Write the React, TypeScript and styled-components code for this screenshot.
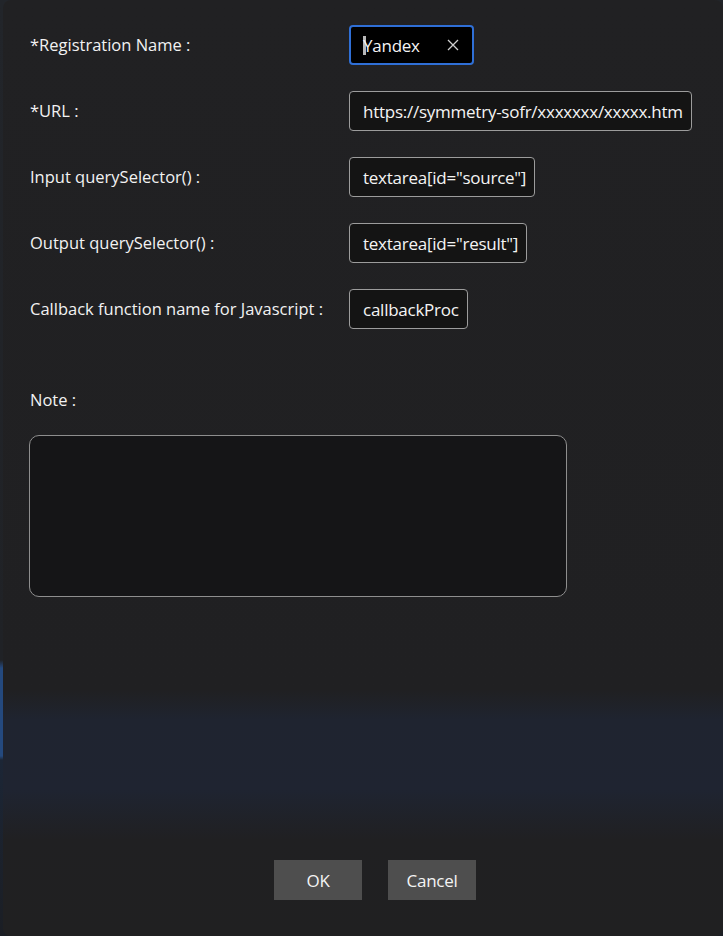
import React from "react";
import styled, { createGlobalStyle } from "styled-components";

const Global = createGlobalStyle`
  html, body {
    margin: 0;
    padding: 0;
    width: 723px;
    height: 936px;
    overflow: hidden;
    background: #1a1d22;
  }
  #root { height: 936px; }
  * { box-sizing: border-box; }
`;

const Screen = styled.div`
  display: flex;
  height: 936px;
  background: linear-gradient(
    180deg,
    #22252a 0px,
    #202226 660px,
    #24497e 668px,
    #24497e 756px,
    #1c2636 760px,
    #1b1e24 936px
  );
  padding-left: 3px;
`;

const Dialog = styled.div`
  flex: 1;
  display: flex;
  flex-direction: column;
  height: 936px;
  border-radius: 8px;
  background: linear-gradient(
    180deg,
    #212123 0px,
    #202022 690px,
    #1f2430 720px,
    #1f2431 790px,
    #202022 840px,
    #202021 936px
  );
  font-family: "Open Sans", "Noto Sans", sans-serif;
  color: #f2f2f2;
  padding: 25px 0 36px 27px;
`;

const Form = styled.div`
  display: grid;
  grid-template-columns: 319px auto;
  grid-auto-rows: 40px;
  row-gap: 26px;
  align-items: center;
  justify-items: start;
`;

const Label = styled.div`
  font-size: 16.5px;
  line-height: 20px;
  color: #f2f2f2;
`;

const Field = styled.div<{ $focused?: boolean }>`
  display: flex;
  align-items: center;
  height: 40px;
  padding: 0 ${(p) => (p.$focused ? "13px" : "8px")} 0 ${(p) => (p.$focused ? "12px" : "13px")};
  border-radius: 4px;
  border: ${(p) => (p.$focused ? "2px solid #2f6fd6" : "1px solid #9c9c9c")};
  background: ${(p) => (p.$focused ? "#000000" : "#141414")};
  font-size: 17px;
  letter-spacing: -0.25px;
  color: #f4f4f4;
  white-space: nowrap;
`;

const Caret = styled.span`
  display: inline-block;
  width: 3px;
  height: 19px;
  background: #b8b8b8;
  margin-right: -3px;
  vertical-align: middle;
`;

const ClearIcon = styled.svg`
  margin-left: 27px;
  flex: none;
`;

const NoteLabel = styled(Label)`
  margin-top: 61px;
`;

const NoteArea = styled.div`
  margin-top: 25px;
  margin-left: -1px;
  width: 538px;
  height: 162px;
  border: 1px solid #8e8e8e;
  border-radius: 10px;
  background: #151517;
`;

const Buttons = styled.div`
  margin-top: auto;
  display: flex;
  gap: 26px;
  padding-left: 244px;
`;

const Button = styled.div`
  width: 88px;
  height: 40px;
  display: flex;
  align-items: center;
  justify-content: center;
  background: #4e4e4e;
  font-size: 17px;
  letter-spacing: -0.3px;
  color: #f4f4f4;
`;

export default function App() {
  return (
    <>
      <Global />
      <Screen>
        <Dialog>
          <Form>
            <Label>*Registration Name :</Label>
            <Field $focused>
              <Caret />
              <span>Yandex</span>
              <ClearIcon width="12" height="12" viewBox="0 0 12 12">
                <path d="M1 1 L11 11 M11 1 L1 11" stroke="#d0d0d0" strokeWidth="1.3" />
              </ClearIcon>
            </Field>
            <Label>*URL :</Label>
            <Field>https://symmetry-sofr/xxxxxxx/xxxxx.htm</Field>
            <Label>Input querySelector() :</Label>
            <Field>textarea[id="source"]</Field>
            <Label>Output querySelector() :</Label>
            <Field>textarea[id="result"]</Field>
            <Label>Callback function name for Javascript :</Label>
            <Field>callbackProc</Field>
          </Form>
          <NoteLabel>Note :</NoteLabel>
          <NoteArea />
          <Buttons>
            <Button>OK</Button>
            <Button>Cancel</Button>
          </Buttons>
        </Dialog>
      </Screen>
    </>
  );
}
